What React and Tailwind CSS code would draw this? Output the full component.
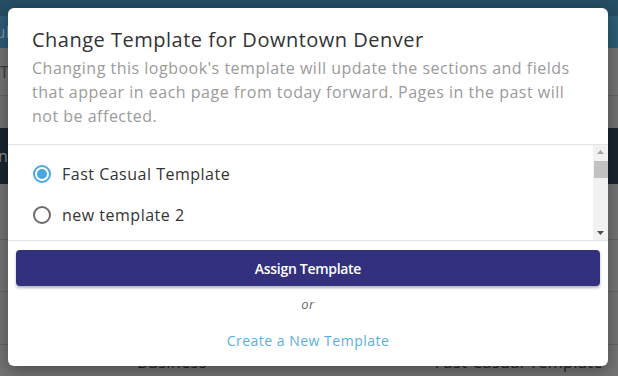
import { useState } from 'react';

const templates = ['Fast Casual Template', 'new template 2', 'Fine Dining Template', 'Bar Template'];

function Radio({ checked }) {
  return (
    <span
      className={`flex h-[18px] w-[18px] shrink-0 items-center justify-center rounded-full border-2 ${
        checked ? 'border-[#4aa8e0]' : 'border-[#6b6b6b]'
      }`}
    >
      {checked && <span className="h-[10px] w-[10px] rounded-full bg-[#4aa8e0]" />}
    </span>
  );
}

function FakeScrollbar() {
  return (
    <div className="flex w-[15px] shrink-0 flex-col items-center bg-[#f1f1f1]">
      <svg width="15" height="14" viewBox="0 0 15 14">
        <path d="M4 9 L7.5 5 L11 9 Z" fill="#a3a3a3" />
      </svg>
      <div className="mt-[2px] h-[17px] w-[14px] bg-[#c1c1c1]" />
      <div className="flex-1" />
      <svg width="15" height="14" viewBox="0 0 15 14">
        <path d="M4 5 L7.5 9 L11 5 Z" fill="#505050" />
      </svg>
    </div>
  );
}

export default function App() {
  const [selected, setSelected] = useState(0);

  return (
    <div className="relative h-[376px] w-[618px] overflow-hidden bg-[#737373] font-['Open_Sans',sans-serif] tracking-[0.5px]">
      {/* dimmed page behind the dialog */}
      <div className="flex flex-col">
        <div className="h-[16px] bg-[#264e64]" />
        <div className="flex h-[32px] items-center bg-[#2d5d76] text-[16px] text-[#7d98a6]">
          <span className="-ml-[52px]">Schedule</span>
        </div>
        <div className="flex h-[48px] items-center border-b border-[#636363] text-[16px] text-[#3a3a3a]">
          <span className="pt-[1px]">Te</span>
        </div>
        <div className="h-[32px] bg-[#717171]" />
        <div className="flex h-[56px] items-center bg-[#1a242e] text-[16px] text-[#8a8f94]">
          <span className="-ml-[2px]">n</span>
        </div>
        <div className="h-[56px] border-b border-[#636363]" />
        <div className="h-[52px] border-b border-[#636363]" />
        <div className="h-[53px] border-b border-[#636363]" />
        <div className="flex h-[31px] items-start pt-[6px] text-[16px] leading-[22px] text-[#222]">
          <span className="ml-[137px]">Business</span>
          <span className="ml-[228px]">Fast Casual Template</span>
        </div>
      </div>

      {/* dialog */}
      <div className="absolute left-[8px] top-[8px] flex h-[358px] w-[600px] flex-col overflow-hidden rounded-[6px] bg-white shadow-[0_4px_16px_rgba(0,0,0,0.35)]">
        <div className="border-b border-[#e3e3e3] px-[24px] pb-[16px] pt-[18px]">
          <h2 className="text-[20px] leading-[28px] text-[#333]">Change Template for Downtown Denver</h2>
          <p className="mt-[2px] text-[16px] leading-[24px] text-[#9a9a9a]">
            Changing this logbook's template will update the sections and fields that appear in each page from
            today forward. Pages in the past will not be affected.
          </p>
        </div>

        <div className="flex h-[96px] border-b border-[#e3e3e3]">
          <div className="flex-1 overflow-hidden pt-[8px]">
            {templates.map((t, i) => (
              <label
                key={t}
                onClick={() => setSelected(i)}
                className="flex h-[41px] cursor-pointer items-center gap-[11px] pl-[25px] text-[16px] text-[#333]"
              >
                <Radio checked={selected === i} />
                <span>{t}</span>
              </label>
            ))}
          </div>
          <FakeScrollbar />
        </div>

        <div className="flex flex-col items-center px-[8px] pt-[9px]">
          <button className="h-[36px] w-full rounded-[4px] bg-[#33307e] text-[14px] font-semibold tracking-[-0.3px] text-white shadow-[0_2px_3px_rgba(0,0,0,0.3)]">
            Assign Template
          </button>
          <span className="mt-[9px] text-[13px] italic leading-[18px] text-[#666]">or</span>
          <a className="mt-[18px] text-[14px] leading-[20px] text-[#5aafe2]">Create a New Template</a>
        </div>
      </div>
    </div>
  );
}
